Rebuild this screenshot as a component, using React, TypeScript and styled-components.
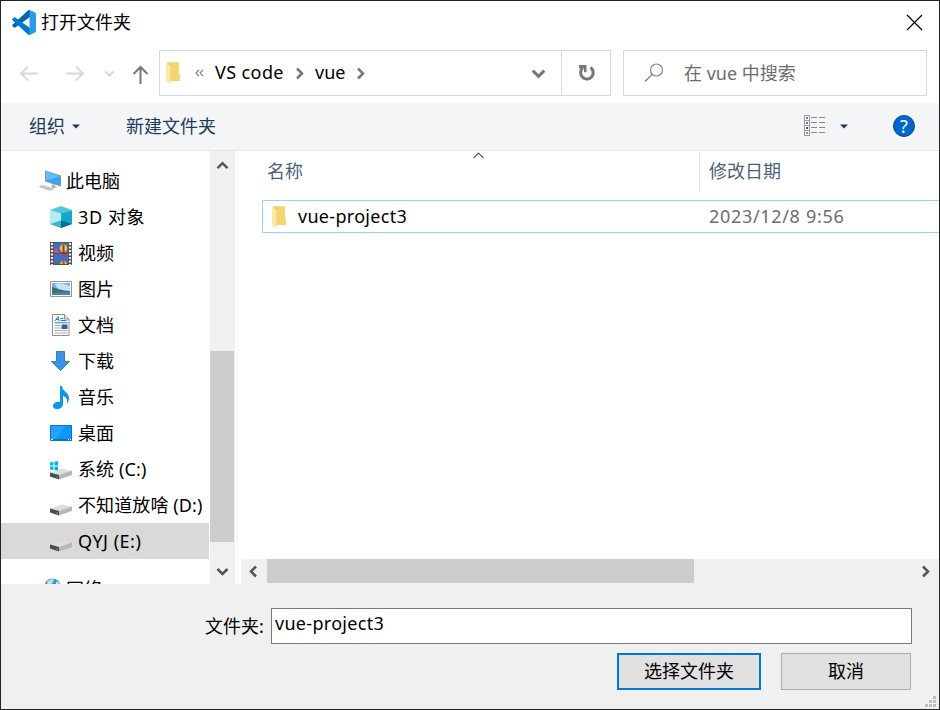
import React from "react";
import styled, { createGlobalStyle } from "styled-components";

const GlobalStyle = createGlobalStyle`
  * { box-sizing: border-box; }
  html, body { margin: 0; padding: 0; overflow: hidden; }
  body { font-family: "Noto Sans", "Noto Sans CJK SC", sans-serif; font-size: 18px; color: #000; }
  svg { display: block; flex: none; }
`;

const Dialog = styled.div`
  width: 940px;
  height: 710px;
  display: flex;
  flex-direction: column;
  border: 1px solid #232323;
  background: #fff;
  overflow: hidden;
`;

const Label = styled.span<{ $track?: number }>`
  line-height: 24px;
  white-space: pre;
  letter-spacing: ${(p) => p.$track ?? 0}px;
`;

const TitleBar = styled.header`
  height: 43px;
  display: flex;
  align-items: center;
  padding: 0 16px 0 10px;
  gap: 5px;
`;

const Title = styled.h1`
  flex: 1;
  margin: -2px 0 0;
  font-size: 18px;
  font-weight: inherit;
  line-height: 24px;
`;

const NavBar = styled.nav`
  height: 59px;
  display: flex;
  align-items: center;
  padding: 0 12px 1px 17px;
`;

const NavButtons = styled.div`
  width: 141px;
  display: flex;
  align-items: center;
`;

const AddressBox = styled.div`
  width: 452px;
  height: 46px;
  display: flex;
  align-items: center;
  border: 1px solid #d9d9d9;
`;

const Crumbs = styled.div`
  flex: 1;
  display: flex;
  align-items: center;
  padding-left: 6px;
`;

const Chevrons = styled.span`
  width: 20px;
  margin-left: 14px;
  display: flex;
`;

const Crumb = styled.span<{ $width: number; $track?: number }>`
  width: ${(p) => p.$width}px;
  line-height: 24px;
  white-space: nowrap;
  letter-spacing: ${(p) => p.$track ?? 0}px;
  margin-top: -2px;
`;

const CrumbArrow = styled.span`
  width: 22px;
`;

const DropButton = styled.div`
  width: 46px;
  display: flex;
  justify-content: center;
`;

const RefreshButton = styled.div`
  width: 49px;
  height: 44px;
  display: flex;
  align-items: center;
  justify-content: center;
  padding-left: 1px;
  border-left: 1px solid #d9d9d9;
`;

const SearchBox = styled.div`
  width: 304px;
  height: 46px;
  margin-left: 12px;
  padding-left: 20px;
  display: flex;
  align-items: center;
  gap: 19px;
  border: 1px solid #d9d9d9;
  color: #6d6d6d;
`;

const Toolbar = styled.div`
  height: 48px;
  display: flex;
  align-items: center;
  padding: 0 24px 1px 28px;
  background: #f4f5f7;
  border-bottom: 1px solid #e6e7e8;
  color: #1e395b;
`;

const ToolButton = styled.div<{ $width: number }>`
  width: ${(p) => p.$width}px;
  display: flex;
  align-items: center;
  gap: 7px;
`;

const ToolSpacer = styled.div`
  flex: 1;
`;

const ViewButton = styled.div`
  display: flex;
  align-items: center;
  gap: 14px;
  margin-right: 45px;
`;

const Main = styled.main`
  height: 433px;
  display: flex;
`;

const Sidebar = styled.aside`
  width: 209px;
  overflow: hidden;
  padding-top: 12px;
`;

const TreeRow = styled.div<{ $indent: number; $selected?: boolean; $gap?: number }>`
  width: 208px;
  height: 36px;
  margin-top: ${(p) => p.$gap ?? 0}px;
  padding-left: ${(p) => p.$indent}px;
  display: flex;
  align-items: center;
  background: ${(p) => (p.$selected ? "#d9d9d9" : "transparent")};
`;

const TreeIcon = styled.span<{ $width: number }>`
  width: ${(p) => p.$width}px;
  flex: none;
  display: flex;
`;

const VScroll = styled.div`
  width: 25px;
  display: flex;
  flex-direction: column;
  background: #f0f0f0;
`;

const VTrack = styled.div`
  height: 200px;
  padding: 8px 0 0 6px;
`;

const VThumb = styled.div`
  width: 24px;
  height: 191px;
  background: #cdcdcd;
`;

const VEnd = styled.div`
  padding: 23px 0 0 6px;
`;

const Splitter = styled.div`
  width: 4px;
  border-left: 2px solid #fff;
  background: #f5f5f5;
  border-right: 1px solid #fff;
`;

const FilePane = styled.section`
  flex: 1;
  display: flex;
  flex-direction: column;
`;

const ColumnHeads = styled.div`
  height: 49px;
  display: flex;
  color: #4c607a;
`;

const NameHead = styled.div`
  width: 461px;
  height: 40px;
  display: flex;
  padding: 8px 0 0 28px;
  border-right: 1px solid #e5e5e5;
`;

const SortMark = styled.span`
  margin: -10px 0 0 169px;
`;

const DateHead = styled.div`
  padding: 8px 0 0 9px;
`;

const FileRow = styled.div`
  height: 33px;
  margin-left: 23px;
  display: flex;
  align-items: center;
  border: 1px solid #99d1ff;
  border-right: 0;
  padding-left: 9px;
`;

const FileName = styled.span`
  width: 411px;
  margin-left: 11px;
  line-height: 24px;
  letter-spacing: 0.3px;
  margin-top: -1px;
`;

const FileDate = styled.span`
  color: #6d6d6d;
  line-height: 24px;
  letter-spacing: 0.68px;
  margin-top: -1px;
`;

const FileSpace = styled.div`
  flex: 1;
`;

const HScroll = styled.div`
  height: 25px;
  margin-left: 2px;
  display: flex;
  background: #f0f0f0;
`;

const HArrow = styled.div<{ $width: number }>`
  width: ${(p) => p.$width}px;
  padding: 6px 0 0 6px;
`;

const HThumb = styled.div`
  width: 427px;
  height: 24px;
  background: #cdcdcd;
`;

const Footer = styled.footer`
  flex: 1;
  background: #f0f0f0;
  padding: 24px 0 0;
  display: flex;
  flex-direction: column;
`;

const FieldRow = styled.div`
  height: 36px;
  display: flex;
  align-items: center;
  padding: 0 27px 0 204px;
`;

const FieldLabel = styled.label`
  width: 66px;
  line-height: 24px;
`;

const Field = styled.div`
  flex: 1;
  height: 36px;
  padding: 2px 3px;
  line-height: 24px;
  letter-spacing: 0.3px;
  background: #fff;
  border: 1px solid #7a7a7a;
`;

const ButtonRow = styled.div`
  display: flex;
  gap: 20px;
  padding: 9px 0 0 616px;
`;

const PushButton = styled.div<{ $primary?: boolean; $width: number }>`
  width: ${(p) => p.$width}px;
  height: 37px;
  padding-bottom: 3px;
  display: flex;
  align-items: center;
  justify-content: center;
  background: #e1e1e1;
  border: ${(p) => (p.$primary ? "2px solid #0078d7" : "1px solid #adadad")};
`;

const GripRow = styled.div`
  display: flex;
  justify-content: flex-end;
  padding: 6px 3px 0 0;
`;

const VsCodeLogo = () => (
  <svg width="25" height="25" viewBox="0 0 100 100">
    <path d="M96 11L75 1c-3-1-5-1-7 1L6 59c-2 2-2 4 0 6l6 5c2 1 4 1 5 0L98 12z" fill="#0065a9" />
    <path d="M96 89L75 99c-3 1-5 1-7-1L6 41c-2-2-2-4 0-6l6-5c2-1 4-1 5 0l81 58z" fill="#007acc" />
    <path d="M75 99c-3 1-5 0-7-1 2 2 6 1 6-3V5c0-4-4-5-6-3 2-2 4-2 7-1l21 10c2 1 4 3 4 6v66c0 3-2 5-4 6z" fill="#279cee" />
  </svg>
);

const NavArrow = ({ dir }: { dir: "left" | "right" | "up" }) => {
  const d = {
    left: "M20 10.5H3M10 3.5l-7 7 7 7",
    right: "M2 10.5h17M12 3.5l7 7-7 7",
    up: "M10.5 20V3M3.5 10l7-7 7 7",
  }[dir];
  return (
    <svg width="21" height="21" viewBox="0 0 21 21">
      <path d={d} fill="none" stroke={dir === "up" ? "#777" : "#d9d9d9"} strokeWidth="2" />
    </svg>
  );
};

type Dir = "up" | "down" | "left" | "right";
const Arrowhead = ({ dir, color = "#555", size = 13, weight = 2.5 }: { dir: Dir; color?: string; size?: number; weight?: number }) => {
  const d = {
    up: "M1.5 9.2l5-5 5 5",
    down: "M1.5 4l5 5 5-5",
    left: "M9 1.5l-5 5 5 5",
    right: "M4 1.5l5 5-5 5",
  }[dir];
  return (
    <svg width={size} height={size} viewBox="0 0 13 13">
      <path d={d} fill="none" stroke={color} strokeWidth={weight} />
    </svg>
  );
};

const FolderIcon = () => (
  <svg width="15" height="22" viewBox="0 0 15 22">
    <path d="M1 .5h12V12l1 1.5V19H4z" fill="#f0ca68" />
    <path d="M5 .5h8V12l1 1.5V19H5z" fill="#f5d474" />
    <path d="M0 .5l4.5 4V22L0 19z" fill="#ffe8a2" />
  </svg>
);

const RefreshIcon = () => (
  <svg width="18" height="18" viewBox="0 0 18 18">
    <path d="M4.5 4.2A6.3 6.3 0 1 0 12.5 3.5" fill="none" stroke="#777" strokeWidth="3" />
    <path d="M1 1h7.5v7.2H6V4.6H1z" fill="#777" />
  </svg>
);

const SearchIcon = () => (
  <svg width="21" height="20" viewBox="0 0 21 20">
    <circle cx="12.5" cy="7" r="6" fill="none" stroke="#858585" strokeWidth="1.2" />
    <path d="M8.3 11.3L1 18.5" stroke="#858585" strokeWidth="1.4" />
  </svg>
);

const CloseIcon = () => (
  <svg width="17" height="17" viewBox="0 0 17 17">
    <path d="M1 1l15 15M16 1L1 16" stroke="#000" strokeWidth="1.2" />
  </svg>
);

const ChevronPair = () => (
  <svg width="9" height="8" viewBox="0 0 9 8">
    <path d="M4 .8L1 4l3 3.2M8 .8L5 4l3 3.2" fill="none" stroke="#777" strokeWidth="1.1" />
  </svg>
);

const Caret = () => (
  <svg width="8" height="5" viewBox="0 0 8 5">
    <path d="M0 .5h8L4 4.5z" fill="#1e395b" />
  </svg>
);

const DetailsIcon = () => (
  <svg width="22" height="22" viewBox="0 0 22 22" shapeRendering="crispEdges">
    {["#4d8ba0", "#4a7fa8", "#b03020", "#78a860"].map((color, i) => (
      <g key={color}>
        <rect x=".5" y={0.5 + i * 5} width="5" height="5" fill="#fff" stroke="#999" />
        <rect x="2" y={2 + i * 5} width="2" height="2" fill={color} />
        <path d={`M7 ${2.5 + i * 5}h6M15 ${2.5 + i * 5}h6`} stroke="#888" />
      </g>
    ))}
  </svg>
);

const HelpBadge = styled.div`
  width: 22px;
  height: 22px;
  border-radius: 50%;
  border: 1px solid #004a91;
  background: #0066cc;
  color: #fff;
  font-size: 18px;
  line-height: 20px;
  text-align: center;
`;

const ComputerIcon = () => (
  <svg width="24" height="22" viewBox="0 0 24 22">
    <path d="M7 .5l16 5v11L7 11.5z" fill="#7f929f" />
    <path d="M8 1.5l14 4.8v8.6L8 10.7z" fill="#35a7f4" />
    <path d="M8 1.5l14 4.8L8 10.7z" fill="#62bdfa" />
    <path d="M14 14l3 1v1.5l3 .8-5 1-3-1 2-1z" fill="#aeb5ba" />
    <path d="M0 16.5l5-1.8L17 19l-5 2z" fill="#d3d7da" />
    <path d="M2 16.8L13 20.2M4.5 15.8l10 3.4" stroke="#a9b0b5" strokeDasharray="2 1" />
  </svg>
);

const CubeIcon = () => (
  <svg width="22" height="22" viewBox="0 0 22 22">
    <path d="M0 4l11 3v15L0 18z" fill="#b6ebf1" />
    <path d="M22 4L11 7v15l11-4z" fill="#16a6cc" />
    <path d="M0 4l11-4 11 4-11 3.5z" fill="#52c7dc" />
    <path d="M0 18l11-3.5V22z" fill="#35b5cc" />
    <path d="M22 18l-11-3.5V22z" fill="#00728e" />
  </svg>
);

const FilmIcon = () => (
  <svg width="22" height="23" viewBox="0 0 22 23">
    <path d="M0 0h22v23H0z" fill="#50514f" />
    <path d="M4 1h14v10H4zM4 12h14v10H4z" fill="#3e6fc4" />
    <path d="M4 11V8l2-2 2 3 2 2z" fill="#d94f6f" />
    <circle cx="13.5" cy="6.2" r="3.7" fill="#f2c230" />
    <path d="M12.5 2.7h2v6.6h-2z" fill="#c52924" />
    <path d="M12.7 9.6h1.8V11h-1.8z" fill="#3b2618" />
    <path d="M12 12h5l-1.5 3h-2z" fill="#d3382c" />
    <path d="M10 22c0-4.5 7-4.5 7 0z" fill="#efb52a" />
    <path d="M12.5 19h2v3h-2z" fill="#d34528" />
    <path d="M4 21l4-1 2 2H4z" fill="#3d7a4a" />
    <path d="M2 1v22M20 1v22" stroke="#eee" strokeWidth="2.2" strokeDasharray="2 1.5" />
  </svg>
);

const PictureIcon = () => (
  <svg width="22" height="16" viewBox="0 0 22 16">
    <path d="M.5.5h21v15H.5z" fill="#fff" stroke="#999" />
    <path d="M2 2h18v12H2z" fill="#79b4e8" />
    <path d="M5 3c6-2 10 1 15 2v5H9z" fill="#c4e2f5" />
    <path d="M2 6c5 1 10 4 18 4v4H2z" fill="#397277" />
    <path d="M2 12c6-1 12-1 18-1v3H2z" fill="#4d81ad" />
  </svg>
);

const DocumentIcon = () => (
  <svg width="18" height="22" viewBox="0 0 18 22">
    <path d="M.5.5h12l4.5 4.5v16.5H.5z" fill="#fff" stroke="#8d8d8d" />
    <path d="M12.5.5V5H17" fill="#e8e8e8" stroke="#8d8d8d" />
    <path d="M3 7l3-4.5L7 7M4 5.5h3M8.5 4.5h3M8.5 6.5h6M2.5 8.8h13" stroke="#1683cc" fill="none" />
    <path d="M2.5 11.5h6M2.5 14h6M2.5 16.5h13M2.5 19h13" stroke="#aaa" />
    <path d="M9.5 10.5h6v4.5h-6z" fill="#355f92" />
  </svg>
);

const DownloadIcon = () => (
  <svg width="19" height="20" viewBox="0 0 19 20">
    <path d="M5.5.5h8v10h5l-9 9-9-9h5z" fill="#3994e6" stroke="#2c7ec9" />
  </svg>
);

const MusicIcon = () => (
  <svg width="16" height="23" viewBox="0 0 16 23">
    <path d="M7 0h2c0 5 7 6 7 12 0 3-1 4.5-2 5.5 1-5-2-7-4-7.5V18c0 3-3 5-6 5s-4-1-4-3c0-3 4-5 7-4z" fill="#0a98ed" />
  </svg>
);

const DesktopIcon = () => (
  <svg width="22" height="16" viewBox="0 0 22 16">
    <path d="M.5.5h21v15H.5z" fill="#0b98fb" stroke="#0c73bd" />
    <path d="M1 1h15L6 14H1z" fill="#20a4ff" />
    <path d="M1 14.5h20" stroke="#0870b9" />
    <path d="M1 14.5h2M18 14.5h1M20 14.5h1" stroke="#fff" />
  </svg>
);

const DriveIcon = ({ system }: { system?: boolean }) => (
  <svg width="22" height="22" viewBox="0 0 22 22">
    <path d="M0 14.5l12-4 10 2.5-13 5z" fill="#dededf" />
    <path d="M0 14.5l9 2.5v4.5l-9-3z" fill="#4b4c4d" />
    <path d="M9 17l13-4.5v4.5L9 21.5z" fill="#b8b8ba" />
    <path d="M6.5 18l1.5.5V20l-1.5-.5z" fill="#3fae54" />
    {system && <path d="M0 4.5l3.5-.5v3.5H0zM4.5 3.8L8 3v4.5H4.5zM0 8.5h3.5V12L0 11.5zM4.5 8.5H8v4l-3.5-.5z" fill="#00b5ee" />}
  </svg>
);

const GlobeIcon = () => (
  <svg width="18" height="22" viewBox="0 0 18 22">
    <circle cx="8.5" cy="8.5" r="8" fill="#4796b8" />
    <path d="M3 4c3-3 5-3 7-2.5l-2 4-4 2zM12 3.5l3 1 1 4-4-1z" fill="#b9e2ea" />
  </svg>
);

const ResizeGrip = () => (
  <svg width="11" height="11" viewBox="0 0 11 11" fill="#bfbfbf" shapeRendering="crispEdges">
    <path d="M8 0h3v3H8zM4 4h3v3H4zM8 4h3v3H8zM0 8h3v3H0zM4 8h3v3H4zM8 8h3v3H8z" />
  </svg>
);

const places = [
  { name: "3D 对象", icon: <CubeIcon />, track: 0.6 },
  { name: "视频", icon: <FilmIcon /> },
  { name: "图片", icon: <PictureIcon /> },
  { name: "文档", icon: <DocumentIcon />, inset: 2 },
  { name: "下载", icon: <DownloadIcon />, inset: 1 },
  { name: "音乐", icon: <MusicIcon />, inset: 3 },
  { name: "桌面", icon: <DesktopIcon /> },
  { name: "系统 (C:)", icon: <DriveIcon system />, track: 0.1 },
  { name: "不知道放啥 (D:)", icon: <DriveIcon />, track: 0.1 },
  { name: "QYJ (E:)", icon: <DriveIcon />, selected: true, track: 0.5 },
];

const Back = styled.span`
  width: 46px;
`;
const Recent = styled.span`
  width: 20px;
  display: flex;
  justify-content: center;
  margin: 0 0 0 -11px;
`;
const UpSlot = styled.span`
  margin: 2px 0 0 11px;
`;

export default function App() {
  return (
    <>
      <GlobalStyle />
      <Dialog>
        <TitleBar>
          <VsCodeLogo />
          <Title>打开文件夹</Title>
          <CloseIcon />
        </TitleBar>
        <NavBar>
          <NavButtons>
            <Back><NavArrow dir="left" /></Back>
            <Back><NavArrow dir="right" /></Back>
            <Recent><Arrowhead dir="down" color="#d9d9d9" size={11} /></Recent>
            <UpSlot><NavArrow dir="up" /></UpSlot>
          </NavButtons>
          <AddressBox>
            <Crumbs>
              <FolderIcon />
              <Chevrons><ChevronPair /></Chevrons>
              <Crumb $width={78} $track={0.4}>VS code</Crumb>
              <CrumbArrow><Arrowhead dir="right" color="#777" /></CrumbArrow>
              <Crumb $width={39}>vue</Crumb>
              <CrumbArrow><Arrowhead dir="right" color="#777" /></CrumbArrow>
            </Crumbs>
            <DropButton><Arrowhead dir="down" color="#777" size={15} /></DropButton>
            <RefreshButton><RefreshIcon /></RefreshButton>
          </AddressBox>
          <SearchBox>
            <SearchIcon />
            <Label>在 vue 中搜索</Label>
          </SearchBox>
        </NavBar>
        <Toolbar>
          <ToolButton $width={97}><Label>组织</Label><Caret /></ToolButton>
          <ToolButton $width={120}><Label>新建文件夹</Label></ToolButton>
          <ToolSpacer />
          <ViewButton><DetailsIcon /><Caret /></ViewButton>
          <HelpBadge>?</HelpBadge>
        </Toolbar>
        <Main>
          <Sidebar>
            <TreeRow $indent={37}>
              <TreeIcon $width={28}><ComputerIcon /></TreeIcon>
              <Label>此电脑</Label>
            </TreeRow>
            {places.map((p) => (
              <TreeRow key={p.name} $indent={49 + (p.inset ?? 0)} $selected={p.selected}>
                <TreeIcon $width={28 - (p.inset ?? 0)}>{p.icon}</TreeIcon>
                <Label $track={p.track}>{p.name}</Label>
              </TreeRow>
            ))}
            <TreeRow $indent={43} $gap={12}>
              <TreeIcon $width={22}><GlobeIcon /></TreeIcon>
              <Label>网络</Label>
            </TreeRow>
          </Sidebar>
          <VScroll>
            <VTrack><Arrowhead dir="up" /></VTrack>
            <VThumb />
            <VEnd><Arrowhead dir="down" /></VEnd>
          </VScroll>
          <Splitter />
          <FilePane>
            <ColumnHeads>
              <NameHead>
                <Label>名称</Label>
                <SortMark><Arrowhead dir="up" color="#555" weight={1.2} /></SortMark>
              </NameHead>
              <DateHead><Label>修改日期</Label></DateHead>
            </ColumnHeads>
            <FileRow>
              <FolderIcon />
              <FileName>vue-project3</FileName>
              <FileDate>2023/12/8 9:56</FileDate>
            </FileRow>
            <FileSpace />
            <HScroll>
              <HArrow $width={26}><Arrowhead dir="left" /></HArrow>
              <HThumb />
              <ToolSpacer />
              <HArrow $width={26}><Arrowhead dir="right" /></HArrow>
            </HScroll>
          </FilePane>
        </Main>
        <Footer>
          <FieldRow>
            <FieldLabel>文件夹:</FieldLabel>
            <Field>vue-project3</Field>
          </FieldRow>
          <ButtonRow>
            <PushButton $primary $width={144}>选择文件夹</PushButton>
            <PushButton $width={130}>取消</PushButton>
          </ButtonRow>
          <GripRow><ResizeGrip /></GripRow>
        </Footer>
      </Dialog>
    </>
  );
}
